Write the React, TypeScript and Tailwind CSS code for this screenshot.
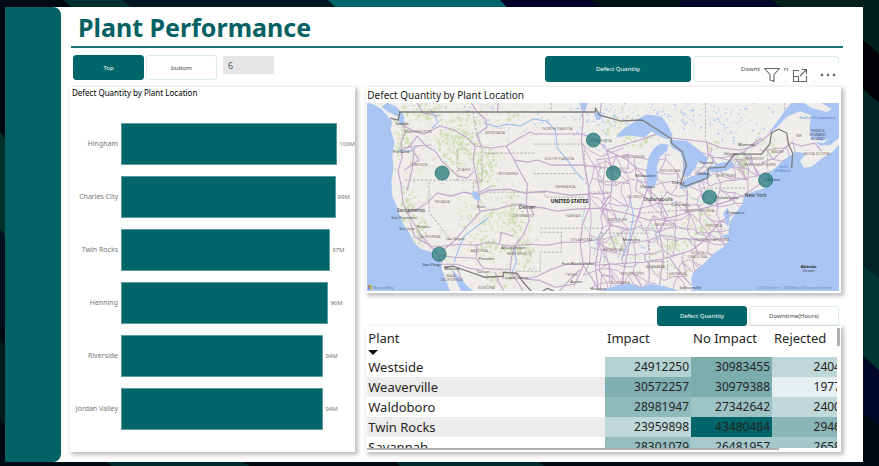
import React from "react";

const FONT = '"Noto Sans", "Open Sans", sans-serif';

const bars = [
  { name: "Hingham", label: "100M", value: 100 },
  { name: "Charles City", label: "99M", value: 99.2 },
  { name: "Twin Rocks", label: "97M", value: 96.7 },
  { name: "Henning", label: "96M", value: 95.9 },
  { name: "Riverside", label: "94M", value: 93.6 },
  { name: "Jordan Valley", label: "94M", value: 93.6 },
];

const rows = [
  { plant: "Westside", cells: [["24912250", "bg-[#b5d2d3]"], ["30983455", "bg-[#7bacae]"], ["2404", "bg-[#bed7d8]"]] },
  { plant: "Weaverville", cells: [["30572257", "bg-[#80b0b3]"], ["30979388", "bg-[#7bacae]"], ["1977", "bg-[#e7f0f1]"]] },
  { plant: "Waldoboro", cells: [["28981947", "bg-[#8fbabc]"], ["27342642", "bg-[#9ec3c5]"], ["2400", "bg-[#bfd8d9]"]] },
  { plant: "Twin Rocks", cells: [["23959898", "bg-[#c0d8d9]"], ["43480484", "bg-[#006669]"], ["2946", "bg-[#8ab6b8]"]] },
  { plant: "Savannah", cells: [["28301079", "bg-[#95bec0]"], ["26481957", "bg-[#a7c9cb]"], ["2658", "bg-[#a5c8ca]"]] },
];

function makeRandom(seed: number) {
  let s = seed;
  return () => {
    s = (s * 16807) % 2147483647;
    return s / 2147483647;
  };
}

type Patch = { x: number; y: number; w: number; h: number; n: number };

function speckle(seed: number, patches: Patch[], size: number) {
  const r = makeRandom(seed);
  let d = "";
  for (const p of patches) {
    for (let i = 0; i < p.n; i++) {
      const x = p.x + (r() + r() - 1) * p.w;
      const y = p.y + (r() + r() - 1) * p.h;
      const a = size * (0.4 + r());
      const b = size * (0.4 + r());
      d += `M${x.toFixed(1)} ${y.toFixed(1)}l${a.toFixed(1)} ${(-b * 0.7).toFixed(1)}l${(a * 0.7).toFixed(1)} ${b.toFixed(1)}l${(-a * 0.8).toFixed(1)} ${(b * 0.9).toFixed(1)}z`;
    }
  }
  return d;
}

const forest = speckle(11, [
  { x: 402, y: 135, w: 8, h: 36, n: 60 },
  { x: 408, y: 205, w: 9, h: 24, n: 50 },
  { x: 425, y: 112, w: 30, h: 12, n: 60 },
  { x: 458, y: 140, w: 26, h: 30, n: 170 },
  { x: 420, y: 232, w: 10, h: 18, n: 40 },
  { x: 484, y: 168, w: 16, h: 20, n: 70 },
  { x: 512, y: 214, w: 14, h: 26, n: 90 },
  { x: 485, y: 245, w: 24, h: 14, n: 60 },
  { x: 520, y: 250, w: 14, h: 22, n: 50 },
  { x: 480, y: 215, w: 20, h: 22, n: 40 },
  { x: 500, y: 120, w: 40, h: 14, n: 15 },
  { x: 620, y: 122, w: 26, h: 18, n: 30 },
  { x: 640, y: 140, w: 22, h: 10, n: 30 },
  { x: 740, y: 163, w: 8, h: 12, n: 60 },
  { x: 713, y: 146, w: 8, h: 6, n: 16 },
  { x: 675, y: 243, w: 18, h: 10, n: 40 },
  { x: 700, y: 225, w: 18, h: 20, n: 40 },
  { x: 620, y: 243, w: 16, h: 18, n: 36 },
  { x: 665, y: 265, w: 50, h: 18, n: 35 },
  { x: 765, y: 145, w: 18, h: 18, n: 25 },
  { x: 495, y: 278, w: 20, h: 14, n: 26 },
], 1.7);

const paleForest = speckle(47, [
  { x: 450, y: 150, w: 70, h: 55, n: 180 },
  { x: 490, y: 220, w: 60, h: 60, n: 170 },
  { x: 690, y: 220, w: 60, h: 60, n: 110 },
], 2);

const lakes = speckle(29, [
  { x: 600, y: 118, w: 40, h: 16, n: 70 },
  { x: 600, y: 145, w: 18, h: 16, n: 20 },
  { x: 690, y: 115, w: 90, h: 16, n: 110 },
  { x: 735, y: 130, w: 40, h: 20, n: 40 },
  { x: 540, y: 125, w: 60, h: 24, n: 18 },
  { x: 475, y: 107, w: 40, h: 5, n: 16 },
  { x: 630, y: 240, w: 60, h: 40, n: 24 },
], 1.1);

const relief = (() => {
  const r = makeRandom(83);
  let d = "";
  for (let i = 0; i < 620; i++) {
    const x = 393 + r() * 145;
    const y = 104 + r() * 186;
    d += `M${x.toFixed(1)} ${y.toFixed(1)}l${(1 + r() * 2).toFixed(1)} ${(r() * 3 - 1.5).toFixed(1)}`;
  }
  return d;
})();

function roadMesh(seed: number, x0: number, y0: number, cols: number, count: number, step: number, skip: number) {
  const r = makeRandom(seed);
  const grid: number[][][] = [];
  for (let j = 0; j < count; j++) {
    grid.push([]);
    for (let i = 0; i < cols; i++) {
      grid[j].push([x0 + i * step + (r() - 0.5) * step * 0.8, y0 + j * step + (r() - 0.5) * step * 0.8]);
    }
  }
  let d = "";
  const link = (a: number[], b: number[]) => {
    const mx = (a[0] + b[0]) / 2 + (r() - 0.5) * 5;
    const my = (a[1] + b[1]) / 2 + (r() - 0.5) * 5;
    d += `M${a[0].toFixed(1)} ${a[1].toFixed(1)}L${mx.toFixed(1)} ${my.toFixed(1)}L${b[0].toFixed(1)} ${b[1].toFixed(1)}`;
  };
  for (let j = 0; j < count; j++) {
    for (let i = 0; i < cols; i++) {
      if (i + 1 < cols && r() > skip) link(grid[j][i], grid[j][i + 1]);
      if (j + 1 < count && r() > skip) link(grid[j][i], grid[j + 1][i]);
      if (i + 1 < cols && j + 1 < count && r() > skip + 0.35) link(grid[j][i], grid[j + 1][i + 1]);
    }
  }
  return d;
}

const eastRoads = roadMesh(5, 602, 158, 13, 12, 12, 0.22);
const northRoads = roadMesh(19, 700, 146, 8, 3, 14, 0.45);
const plainsRoads = roadMesh(61, 590, 150, 3, 9, 17, 0.25);

const mapLabels: [number, number, string, string][] = [
  [419, 133, "WASHINGTON", "#8a7a78"],
  [496, 134, "MONTANA", "#8a7a78"],
  [558, 130, "NORTH DAKOTA", "#8a7a78"],
  [560, 160, "SOUTH DAKOTA", "#8a7a78"],
  [420, 166, "OREGON", "#8a7a78"],
  [465, 171, "IDAHO", "#8a7a78"],
  [509, 175, "WYOMING", "#8a7a78"],
  [566, 188, "NEBRASKA", "#8a7a78"],
  [443, 203, "NEVADA", "#8a7a78"],
  [482, 208, "Utah", "#665f64"],
  [523, 217, "COLORADO", "#8a7a78"],
  [574, 217, "KANSAS", "#8a7a78"],
  [405, 219, "San Francisco", "#444"],
  [408, 230, "San Jose", "#555"],
  [424, 228, "Fresno", "#555"],
  [430, 238, "CALIFORNIA", "#8a7a78"],
  [456, 240, "Las Vegas", "#555"],
  [480, 252, "ARIZONA", "#8a7a78"],
  [487, 260, "Phoenix", "#444"],
  [514, 249, "Albuquerque", "#444"],
  [520, 255, "NEW MEXICO", "#8a7a78"],
  [484, 273, "Tucson", "#444"],
  [433, 266, "San Diego", "#333"],
  [453, 270, "Mexicali", "#333"],
  [452, 277, "BAJA", "#8a7a78"],
  [452, 281, "CALIFORNIA ", "#8a7a78"],
  [487, 289, "SONORA", "#8a7a78"],
  [516, 279, "Ciudad Juarez", "#444"],
  [582, 241, "OKLAHOMA", "#8a7a78"],
  [579, 265, "Fort Worth  Dallas", "#444"],
  [572, 276, "TEXAS", "#8a7a78"],
  [577, 283, "Austin", "#444"],
  [599, 290, "Houston", "#444"],
  [403, 125, "Seattle", "#333"],
  [402, 153, "Portland", "#333"],
  [601, 142, "MINNESOTA", "#8a7a78"],
  [634, 158, "WISCONSIN", "#8a7a78"],
  [646, 177, "Milwaukee", "#333"],
  [671, 172, "MICHIGAN", "#8a7a78"],
  [679, 184, "Detroit", "#333"],
  [648, 188, "Chicago", "#333"],
  [636, 198, "ILLINOIS", "#8a7a78"],
  [681, 206, "Cincinnati", "#444"],
  [665, 226, "KENTUCKY", "#8a7a78"],
  [618, 221, "MISSOURI", "#8a7a78"],
  [632, 241, "Memphis", "#444"],
  [614, 251, "ARKANSAS", "#8a7a78"],
  [656, 268, "ALABAMA", "#8a7a78"],
  [678, 275, "GEORGIA", "#8a7a78"],
  [633, 275, "MISSISSIPPI", "#8a7a78"],
  [620, 284, "LOUISIANA", "#8a7a78"],
  [691, 289, "Jacksonville", "#333"],
  [698, 254, "SOUTH", "#8a7a78"],
  [698, 258, "CAROLINA", "#8a7a78"],
  [713, 241, "NORTH CAROLINA", "#8a7a78"],
  [714, 227, "VIRGINIA", "#8a7a78"],
  [700, 212, "WEST VIRGINIA", "#8a7a78"],
  [736, 214, "Delaware", "#444"],
  [727, 199, "Philadelphia", "#444"],
  [774, 181, "Boston", "#333"],
  [726, 177, "NEW YORK", "#8a7a78"],
  [755, 160, "VERMONT", "#8a7a78"],
  [760, 166, "NEW HAMPSHIRE", "#8a7a78"],
  [778, 153, "MAINE", "#8a7a78"],
  [799, 137, "NB", "#8a7a78"],
  [747, 146, "Montreal", "#333"],
  [731, 155, "Ottawa", "#444"],
  [707, 164, "Toronto", "#333"],
  [703, 175, "London", "#333"],
  [818, 132, "PRINCE", "#555a75"],
  [818, 136, "EDWARD", "#555a75"],
  [818, 140, "ISLAND", "#555a75"],
  [817, 155, "NOVA SCOTIA", "#8a7a78"],
  [818, 119, "Gulf of St Lawrence", "#5278c8"],
  [784, 168, "Gulf", "#5278c8"],
  [783, 172, "of Maine", "#5278c8"],
];

const cityLabels: [number, number, string][] = [
  [412, 212, "Sacramento"],
  [528, 209, "Denver"],
  [659, 201, "Indianapolis"],
  [756, 197, "New York"],
];

const plants = [
  [594, 140],
  [443, 173],
  [614, 173],
  [766, 180],
  [710, 197],
  [440, 254],
];

function UsMap() {
  return (
    <svg
      viewBox="368 103 471 188"
      preserveAspectRatio="xMidYMid slice"
      role="img"
      aria-label="Map of defect quantity by plant location"
      className="block w-full bg-[#efeeea]"
    >
      <path d={relief} stroke="#d9d8d3" strokeWidth="0.7" fill="none" />
      <path d={paleForest} fill="#e4ead6" />
      <path d={forest} fill="#d0dfb6" />
      <path d={lakes} fill="#a9c8f5" />

      <g fill="none" stroke="#9a9a9a" strokeWidth="0.7" strokeDasharray="2.5 1.5">
        <path d="M552 103V112M534 144H583M492 153.500H497M534 173.500H580M485 153H535M532 192H546V197H585M486 192H545M541 232H562V252H541V271H516M541 228H603M474 112L477 133L483 149V182H474V193M406 180H483M430 182V212L452 240M458 150V182M585 150L587 185M590 192H612M603 232L605 262M601 233H650M640 228H690M650 240V280M668 240V278M640 213L700 209M600 168H630M706 103V140M785 103V118M688 190V212M662 195V215M703 188H746M768 150V170" />
      </g>
      <g fill="none" stroke="#97bdf2" strokeWidth="1">
        <path d="M485 123L498 127L508 124L521 126L534 119L547 121L556 130L558 148L568 160L575 170L584 180" />
        <path d="M399 150L412 151L420 145M490 217L478 226L465 236L459 250L455 262M432 110L439 122L433 128M515 245L517 262L513 272M630 195L634 215L630 240L622 260" />
      </g>
      <g fill="none" stroke="#a6d8cc" strokeWidth="0.8">
        <path d="M586 205L583 222L594 240L603 235M690 168L730 166L755 163M602 232L594 255M690 197L706 203L722 199M650 220L660 240" />
      </g>

      <g fill="none" stroke="#c3a4cd" strokeWidth="1.1" strokeLinejoin="round">
        <path d={eastRoads} strokeWidth="0.9" />
        <path d={plainsRoads} strokeWidth="0.8" />
        <path d={northRoads} strokeWidth="0.9" />
        <path d="M402 112L404 124L406 132L402 142L403 158L399 170L402 185L404 203L408 212L414 222L422 235L430 245L437 251L443 263" />
        <path d="M404 125L414 131L425 134L441 126L455 130L467 137L476 146L492 148L507 146L520 138L531 132L536 134H582L594 138L607 148" />
        <path d="M403 150L411 146L418 136L428 147L436 151L443 161L451 169L459 176L468 178L475 171" />
        <path d="M405 148L418 146L432 145M415 148L413 170L408 190M476 146L474 160L478 180L480 192L479 205L481 212L468 226L456 240L444 250" />
        <path d="M407 213L420 208L429 202L438 193L452 196L465 192L478 195L490 190L510 189L526 193L545 191L570 195L590 194L610 193" />
        <path d="M481 211L497 209L508 206L521 204L529 206L545 208L558 211L575 209L602 208M507 146L514 158L520 170L528 184L527 205L530 220L524 235L516 245L512 258L511 272" />
        <path d="M515 160L529 162L538 160L552 165H582L602 167M582 105L584 120L582 140L585 165L589 185L591 205L583 225L581 245L584 265L575 285" />
        <path d="M430 246L443 246L459 244L475 245L490 242L500 244L513 246L530 244L548 245L564 242L583 242L600 239" />
        <path d="M440 255L455 257L477 258L484 268L497 269L511 269M443 264L458 264L470 268L484 270M478 245L477 257M500 244L502 232L514 236M511 272L526 279L538 276L552 269L567 264L583 264L600 262M526 279L540 280L556 287L575 284M583 264L592 277L599 289M511 272L520 284L524 291M580 270L568 282L560 291M458 268L464 283L470 291M496 272L500 283L505 291" />
        <path d="M472 103L478 112L486 119L488 127L478 134L482 146M405 170L420 160L412 148M418 103L424 113L440 116M499 103L498 112M492 186L480 192M431 245L416 237L411 222M535 215L530 206M602 103L600 120M607 150L640 140L668 130L672 138L690 140L707 142L722 148L740 150L755 146L770 134L782 118M707 142L709 156L704 166L697 173M730 157L744 152L752 145L762 138M744 152L752 163L760 175L766 181M762 163L775 158L785 148L792 143L802 146L815 143L822 151M745 195L760 184L768 178M730 200L745 195L760 184" />
        <path d="M607 150L613 170L612 193L602 208L612 225L600 240L596 265L599 291M607 150L628 160L645 176L648 188L640 212L631 240L626 262L622 285M602 208L627 213L650 220L668 218L690 212L712 206L732 200M648 188L660 200L668 215L660 232L664 255L660 285M631 243L650 240L662 235L680 238L705 240L730 238M596 265L626 263L645 262L670 257L692 250L705 240L720 222L736 212M670 257L680 272L692 285" />
      </g>

      <g fill="#a8c5f4" stroke="#9dbdf0" strokeWidth="0.5">
        <path d="M367 102L375 105L382 109L388 116L393 122L391 129L395 142L393 155L394 168L392 182L393 196L396 203L400 214L404 224L410 233L415 243L422 249L432 252L435 258L441 262L443 271L447 281L451 292H367Z" />
        <path d="M388 103L397 107L404 115L405 123L401 124L399 116L390 112L383 107Z" />
        <path d="M453 270L460 277L467 285L475 292H463L458 282Z" />
        <path d="M617 137L624 129L634 123L640 118L650 115L662 117L668 125L673 136L668 139L660 136L652 131L645 137L630 135Z" />
        <path d="M648 185L647 170L650 156L655 148L661 144L669 145L667 151L660 157L657 167L658 178L655 185L650 188Z" />
        <path d="M670 140L687 141L698 149L707 157L707 164L699 161L694 170L688 177L683 175L685 163L681 152L672 147Z" />
        <path d="M680 188L686 179L697 175L708 171L711 176L700 182L686 188Z" />
        <path d="M708 169L718 164L732 161L734 165L728 170L712 172Z" />
        <path d="M472 193L478 191L481 200L476 199ZM580 103H588L585 112ZM595 114L600 112L602 118L597 120Z" />
        <path d="M793 102L786 110L779 120L770 132L775 129L788 116L800 111L812 115L810 128L812 139L820 145L830 145L840 137V102Z" />
        <path d="M840 144L833 152L823 158L812 167L804 168L800 161L806 154L797 152L792 155L781 163L775 169L766 175L764 180L773 181L766 188L753 192L745 195L743 204L736 213L731 221L729 232L732 238L724 247L714 254L704 264L696 270L692 278L694 292H840Z" />
        <path d="M597 292L606 289L620 285L634 284L641 288L650 284L664 286L674 289L682 292Z" />
        <path d="M724 213L728 208L730 216L728 226ZM722 236L732 233L731 239Z" />
      </g>
      <path d="M803 102H820L832 109L827 112L812 108Z" fill="#efeeea" />
      <path d="M813 138L822 141L829 139L824 143L814 142Z" fill="#efeeea" />

      <g fill="none" stroke="#7d7d7b" strokeWidth="1.3" strokeLinejoin="round">
        <path d="M400 112H596V108L600 115L622 121L643 120L672 139L672 143L683 152L687 165L681 184L686 186L708 178L709 168L725 167L735 154H762L770 144L772 133L779 129L787 133L789 145L793 153L792 168" />
        <path d="M401 112L399 120L391 118M445 267L454 266L486 277L504 276V272L518 273L524 282L532 291M542 292L548 288L555 291" />
      </g>

      {mapLabels.map(([x, y, text, color]) => (
        <text key={text} x={x} y={y} fill={color} textAnchor="middle" fontFamily={FONT} fontSize="4">
          {text}
        </text>
      ))}
      {cityLabels.map(([x, y, text]) => (
        <text key={text} x={x} y={y} fill="#333" textAnchor="middle" fontFamily={FONT} fontSize="5">
          {text}
        </text>
      ))}
      <text x="570" y="203" fill="#222" textAnchor="middle" fontFamily={FONT} fontSize="5" fontWeight="700">
        UNITED STATES
      </text>
      <text x="809" y="268" fill="#222" textAnchor="middle" fontFamily={FONT} fontSize="4" fontWeight="700">
        Atlantic
      </text>
      <text x="809" y="272" fill="#333" textAnchor="middle" fontFamily={FONT} fontSize="4">
        Ocean
      </text>
      <path d="M369 285h2v2h-2z" fill="#e0742f" />
      <path d="M371 285h2v2h-2z" fill="#8fb53a" />
      <path d="M369 287h2v2h-2z" fill="#4c93d9" />
      <path d="M371 287h2v2h-2z" fill="#e5b92f" />
      <text x="374" y="289" fill="#6d7f9c" fontFamily={FONT} fontSize="3">
        Microsoft Bing
      </text>
      <text x="832" y="289" fill="#6d7f9c" textAnchor="end" fontFamily={FONT} fontSize="3">
        © 2023 TomTom, © 2023 Microsoft Corporation Terms
      </text>

      {plants.map(([x, y]) => (
        <circle key={x} cx={x} cy={y} r="7" fill="#1c7678" fillOpacity="0.72" stroke="#2b7375" strokeWidth="0.8" />
      ))}
    </svg>
  );
}

function Backdrop() {
  return (
    <svg
      viewBox="0 0 879 466"
      preserveAspectRatio="none"
      aria-hidden="true"
      className="absolute inset-0 h-full w-full"
    >
      <rect width="879" height="466" fill="#000a12" />
      <path d="M64 0H122L135 10H74Z" fill="#00302f" />
      <path d="M122 0H328L338 10H135Z" fill="#001722" />
      <path d="M328 0H500L510 10H338Z" fill="#00666a" />
      <path d="M500 0H590L600 10H510Z" fill="#00002a" />
      <path d="M590 0H680V10H600Z" fill="#000f18" />
      <path d="M680 0H772L785 10H680Z" fill="#00082a" />
      <path d="M772 0H879V54L862 39V10H785Z" fill="#002019" />
      <path d="M862 39L879 54V103L862 88Z" fill="#000206" />
      <path d="M862 88L879 103V277L862 265Z" fill="#002524" />
      <path d="M862 265L879 277V370L862 355Z" fill="#003632" />
      <path d="M862 355L879 370V424L862 412Z" fill="#000828" />
      <path d="M0 132L6 140V235L0 230Z" fill="#00302b" />
      <path d="M0 230L6 235V330L0 325Z" fill="#00101e" />
      <path d="M0 340L6 345V425L0 420Z" fill="#001a19" />
      <path d="M104 460H240L250 466H112Z" fill="#002b2c" />
      <path d="M395 460H535L545 466H400Z" fill="#002b2c" />
    </svg>
  );
}

const selected =
  "rounded-[3px] border border-[#00666a] bg-[#00666a] text-[6px] leading-3 text-white";
const unselected =
  "rounded-[3px] border border-[#dcebeb] bg-white text-[6px] leading-3 text-[#444]";
const panel = "bg-white shadow-[2px_2px_4px_1px_rgba(0,0,0,0.25)]";

export default function App() {
  return (
    <div
      className="relative flex min-h-screen flex-col bg-[#000a12] pt-[7px] pr-4 pb-1 pl-[5px]"
      style={{ fontFamily: FONT }}
    >
      <Backdrop />
      <div className="relative flex flex-1 bg-white">
        <aside className="w-14 shrink-0 rounded-r-lg bg-[#036163]" />
        <main className="flex min-w-0 flex-1 flex-col pr-5 pb-[10px] pl-[9px]">
          <header className="ml-px border-b-2 border-[#1f7476] pl-[7px]">
            <h1 className="h-[39px] text-[25px] leading-[40px] font-bold text-[#036163]">Plant Performance</h1>
          </header>

          <div className="mt-[7px] flex flex-1 gap-[11px] pr-[2px]">
            <section className="flex w-[37%] shrink-0 flex-col">
              <div className="flex h-8 gap-[2px] pl-[3px]">
                <button type="button" className={`h-[25px] w-[71px] ${selected}`}>
                  Top
                </button>
                <button type="button" className={`h-[25px] w-[71px] ${unselected}`}>
                  buttom
                </button>
                <input
                  type="text"
                  aria-label="Number of plants"
                  defaultValue="6"
                  className="mt-px ml-1 h-[18px] w-[51px] bg-[#e6e6e6] px-[5px] text-[9px] leading-4 text-[#555]"
                />
              </div>
              <div className={`flex flex-1 flex-col ${panel}`}>
                <h2 className="pl-[2px] text-[8px] leading-3 text-black">Defect Quantity by Plant Location</h2>
                <ul className="mt-6 flex flex-col gap-[11px]">
                  {bars.map((b) => (
                    <li key={b.name} className="flex h-[42px] items-center">
                      <span className="w-12 shrink-0 text-right text-[7px] leading-3 whitespace-nowrap text-[#777]">
                        {b.name}
                      </span>
                      <div className="ml-[3px] flex h-full flex-1 items-center pr-[18px]">
                        <div
                          className="h-full shrink-0 border border-[#5d9c9e] bg-[#00666a]"
                          style={{ width: `${b.value}%` }}
                        />
                        <span className="ml-[2px] text-[6px] leading-3 text-[#777]">{b.label}</span>
                      </div>
                    </li>
                  ))}
                </ul>
              </div>
            </section>

            <section className="flex min-w-0 flex-1 flex-col">
              <div className="relative flex h-8 justify-end gap-[2px] pt-px pr-[2px]">
                <button type="button" className={`h-[26px] w-[146px] ${selected}`}>
                  Defect Quantity
                </button>
                <button type="button" className={`h-[26px] w-[146px] ${unselected}`}>
                  Downtime(Hours)
                </button>
                <div className="absolute top-2 right-px flex gap-1">
                  <button type="button" aria-label="Filters" className="h-5 w-6 bg-white">
                    <svg viewBox="0 0 24 20" className="h-5 w-6" fill="none" stroke="#666" strokeWidth="1.1">
                      <path d="M4.500 5.500H19.500L14 11.500V18.500L10 17V11.500Z" strokeLinejoin="round" />
                    </svg>
                  </button>
                  <button type="button" aria-label="Focus mode" className="h-5 w-6 bg-white">
                    <svg viewBox="0 0 24 20" className="h-5 w-6" fill="none" stroke="#666" strokeWidth="1.1">
                      <path d="M11 7.500H5.500V18.500H18.500V13M5.500 13.500H10.500V18.500M14 6.500H18.500V11M18.500 6.500L12 13" />
                    </svg>
                  </button>
                  <button type="button" aria-label="More options" className="h-5 w-6 bg-white">
                    <svg viewBox="0 0 24 20" className="h-5 w-6" fill="#666">
                      <circle cx="6" cy="12" r="1.300" />
                      <circle cx="12" cy="12" r="1.300" />
                      <circle cx="18" cy="12" r="1.300" />
                    </svg>
                  </button>
                </div>
              </div>

              <div className={`pr-[2px] pb-[2px] pl-px ${panel}`}>
                <h2 className="text-[10px] leading-4 text-[#222]">Defect Quantity by Plant Location</h2>
                <UsMap />
              </div>

              <div className="mt-[13px] flex h-5 justify-end gap-[2px] pr-[2px]">
                <button type="button" className={`w-[90px] ${selected}`}>
                  Defect Quantity
                </button>
                <button type="button" className={`w-[90px] ${unselected}`}>
                  Downtime(Hours)
                </button>
              </div>

              <div className={`flex flex-col pl-px ${panel}`}>
                <div className="flex h-[122px]">
                  <div className="min-w-0 flex-1 overflow-hidden">
                    <table className="w-[calc(100%+4px)] table-fixed border-collapse text-[13px] text-[#252423]">
                      <colgroup>
                        <col />
                        <col className="w-[86px]" />
                        <col className="w-[81px]" />
                        <col className="w-[69px]" />
                      </colgroup>
                      <thead>
                        <tr className="h-[31px] text-left align-top leading-6">
                          <th className="p-0 pl-px font-normal" aria-sort="descending">
                            Plant
                            <svg viewBox="0 0 10 5" className="h-[5px] w-[10px]" aria-hidden="true">
                              <path d="M0 0H10L5 5Z" fill="#111" />
                            </svg>
                          </th>
                          <th className="p-0 pl-[2px] font-normal">Impact</th>
                          <th className="p-0 pl-[2px] font-normal whitespace-nowrap">No Impact</th>
                          <th className="p-0 pl-[2px] font-normal">Rejected</th>
                        </tr>
                      </thead>
                      <tbody>
                        {rows.map((row) => (
                          <tr key={row.plant} className="h-5 leading-5 even:bg-[#ececec]">
                            <th scope="row" className="p-0 pl-px text-left font-normal">
                              {row.plant}
                            </th>
                            {row.cells.map(([value, tone], i) => (
                              <td
                                key={i}
                                className={`p-0 text-right text-[12px] ${i < 2 ? "pr-[2px]" : ""} ${tone}`}
                              >
                                {value}
                              </td>
                            ))}
                          </tr>
                        ))}
                      </tbody>
                    </table>
                  </div>
                  <div className="w-1 pt-[2px]">
                    <div className="h-[18px] w-[3px] bg-[#b0b0b0]" />
                  </div>
                </div>
                <div className="h-[2px] w-[87%] bg-[#b0b0b0]" />
                <div className="h-[2px]" />
              </div>
            </section>
          </div>
        </main>
      </div>
    </div>
  );
}
